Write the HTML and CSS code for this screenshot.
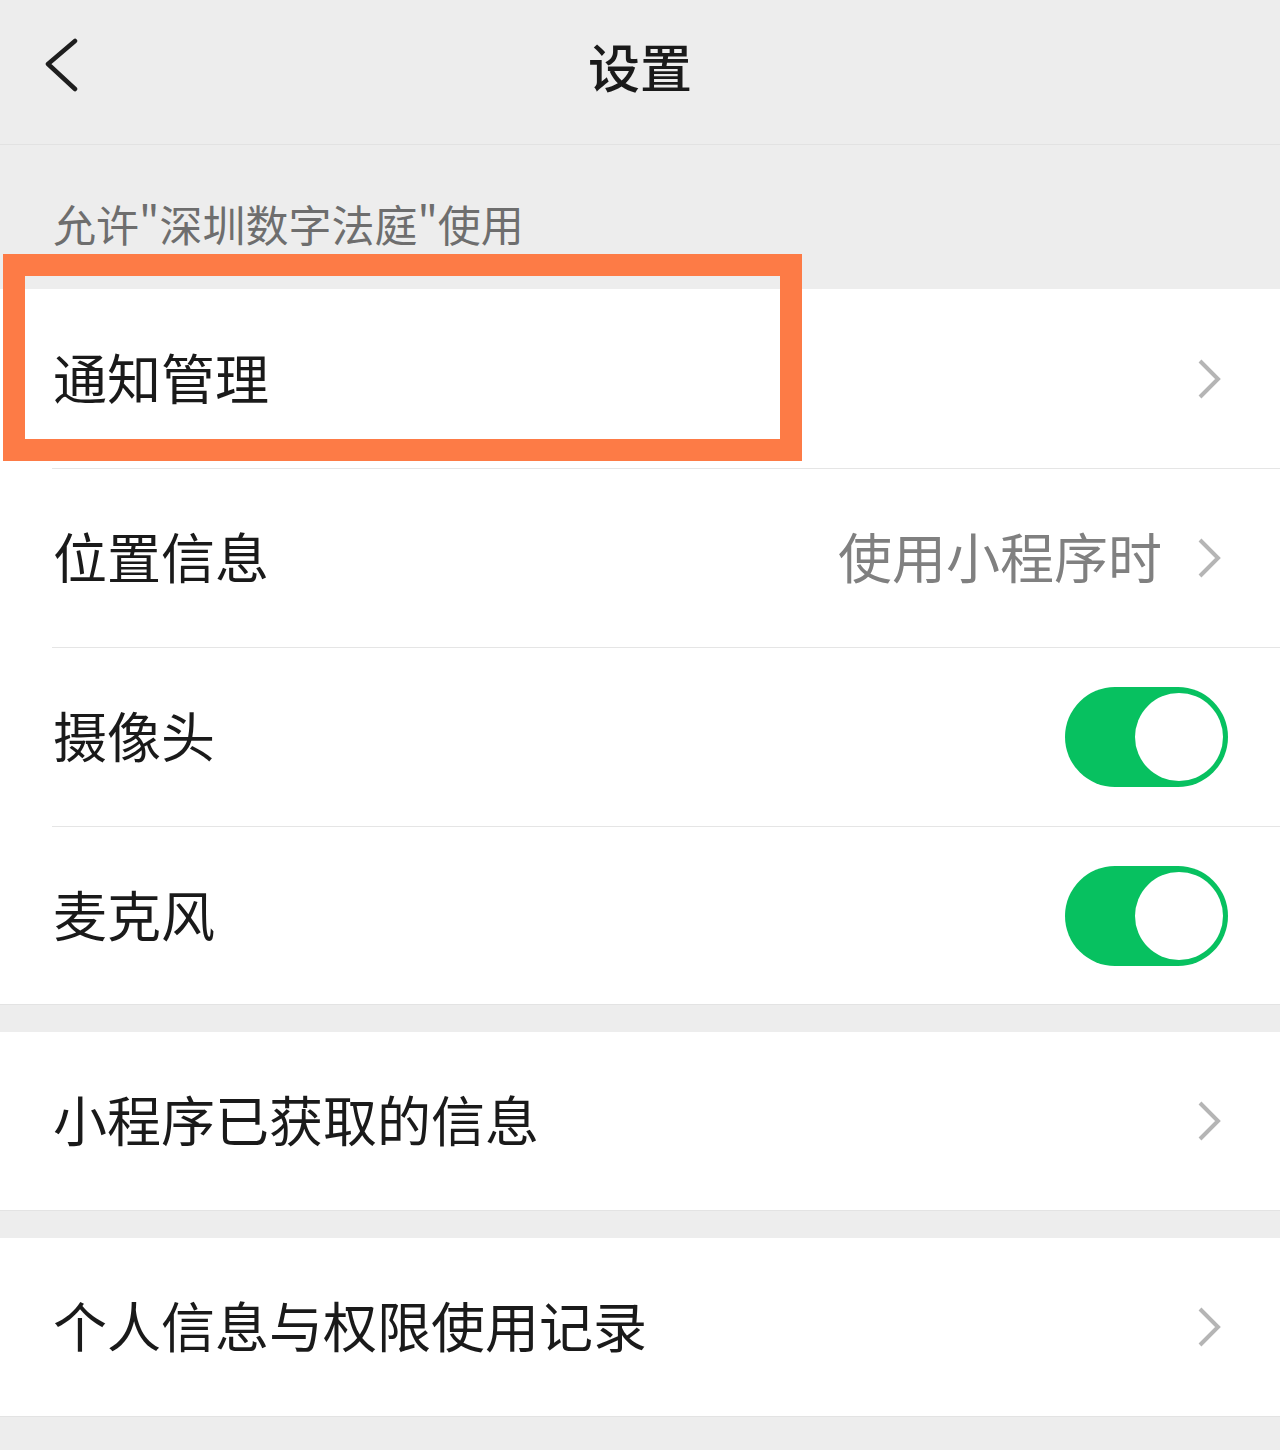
FILE: index.html
```html
<!DOCTYPE html>
<html lang="zh-CN">
<head>
<meta charset="utf-8">
<title>设置</title>
<link rel="stylesheet" href="styles.css">
</head>
<body>
<header class="navbar">
  <div class="nav-left">
    <svg class="back" width="36" height="56" viewBox="0 0 36 56">
      <path d="M30 3 L3 26 L30 51" fill="none" stroke="#1e1e1e" stroke-width="4.5" stroke-linecap="round" stroke-linejoin="round"/>
    </svg>
  </div>
  <h1 class="title">设置</h1>
  <div class="nav-right"></div>
</header>

<div class="section-label">允许"深圳数字法庭"使用</div>

<section class="group">
  <div class="row">
    <span class="label">通知管理</span>
    <span class="right">
      <svg class="chev" width="28" height="44" viewBox="0 0 28 44"><path d="M4 4 L22 22 L4 40" fill="none" stroke="#b5b5b5" stroke-width="4"/></svg>
    </span>
  </div>
  <div class="row">
    <span class="label">位置信息</span>
    <span class="right">
      <span class="value">使用小程序时</span>
      <svg class="chev" width="28" height="44" viewBox="0 0 28 44"><path d="M4 4 L22 22 L4 40" fill="none" stroke="#b5b5b5" stroke-width="4"/></svg>
    </span>
  </div>
  <div class="row">
    <span class="label">摄像头</span>
    <span class="right">
      <span class="switch"><span class="knob"></span></span>
    </span>
  </div>
  <div class="row">
    <span class="label">麦克风</span>
    <span class="right">
      <span class="switch"><span class="knob"></span></span>
    </span>
  </div>
</section>

<section class="group">
  <div class="row">
    <span class="label">小程序已获取的信息</span>
    <span class="right">
      <svg class="chev" width="28" height="44" viewBox="0 0 28 44"><path d="M4 4 L22 22 L4 40" fill="none" stroke="#b5b5b5" stroke-width="4"/></svg>
    </span>
  </div>
</section>

<section class="group">
  <div class="row">
    <span class="label">个人信息与权限使用记录</span>
    <span class="right">
      <svg class="chev" width="28" height="44" viewBox="0 0 28 44"><path d="M4 4 L22 22 L4 40" fill="none" stroke="#b5b5b5" stroke-width="4"/></svg>
    </span>
  </div>
</section>

<div class="highlight"></div>
</body>
</html>
```

FILE: styles.css
```css
* { box-sizing: border-box; }

html, body {
  margin: 0;
  padding: 0;
}

body {
  position: relative;
  width: 1280px;
  min-height: 1450px;
  background: #ededed;
  font-family: "Noto Sans CJK SC", "Noto Sans", sans-serif;
  color: #1a1a1a;
}

.navbar {
  height: 145px;
  display: grid;
  grid-template-columns: 1fr auto 1fr;
  align-items: center;
  padding: 0 0 12px 0;
  border-bottom: 1px solid #e2e2e2;
  background: #ededed;
}

.nav-left {
  padding-left: 45px;
  display: flex;
  align-items: center;
}

.back { display: block; }

.title {
  margin: 0;
  font-size: 52px;
  font-weight: 500;
  line-height: 60px;
  color: #1a1a1a;
}

.section-label {
  height: 144px;
  padding: 56px 0 0 53px;
  font-size: 43px;
  line-height: 44px;
  color: #6e6e6e;
}

.group {
  background: #ffffff;
  border-bottom: 1px solid #e3e3e3;
  margin-bottom: 27px;
}

.row {
  height: 179px;
  margin-left: 52px;
  padding: 0 52px 4px 1px;
  display: flex;
  align-items: center;
  justify-content: space-between;
}

.group .row:last-child { height: 178px; }

.row + .row {
  border-top: 1px solid #e5e5e5;
}

.label {
  font-size: 54px;
  line-height: 60px;
  color: #1a1a1a;
}

.right {
  display: flex;
  align-items: center;
  margin-bottom: -4px;
}

.value {
  font-size: 54px;
  line-height: 60px;
  color: #808080;
  margin-right: 34px;
  margin-bottom: 4px;
}

.chev {
  display: block;
  margin-right: 4px;
}

.switch {
  width: 163px;
  height: 100px;
  border-radius: 50px;
  background: #07c160;
  display: flex;
  align-items: center;
  justify-content: flex-end;
  padding-right: 5px;
}

.knob {
  width: 88px;
  height: 88px;
  border-radius: 50%;
  background: #ffffff;
}

.highlight {
  position: absolute;
  left: 3px;
  top: 254px;
  width: 799px;
  height: 207px;
  border: 22px solid #fd7b46;
  pointer-events: none;
}
```
